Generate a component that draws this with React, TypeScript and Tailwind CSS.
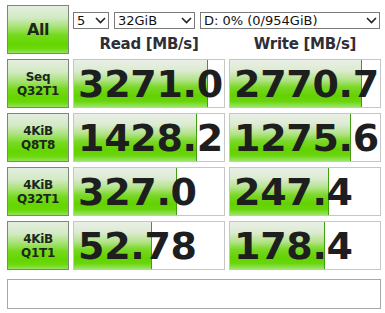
import React from "react";

type Row = { l1: string; l2: string; r: string; w: string };

const rows: Row[] = [
  { l1: "Seq", l2: "Q32T1", r: "3271.0", w: "2770.7" },
  { l1: "4KiB", l2: "Q8T8", r: "1428.2", w: "1275.6" },
  { l1: "4KiB", l2: "Q32T1", r: "327.0", w: "247.4" },
  { l1: "4KiB", l2: "Q1T1", r: "52.78", w: "178.4" },
];

function barWidth(v: number) {
  return Math.round(25 + 31 * Math.log10(v));
}

function Chevron() {
  return (
    <svg width="11" height="7" viewBox="0 0 11 7" className="shrink-0">
      <path d="M1 1 L5.5 5.5 L10 1" fill="none" stroke="#222" strokeWidth="1.6" />
    </svg>
  );
}

function Select({ text, w }: { text: string; w: string }) {
  return (
    <div
      className={`${w} h-[17px] border border-[#7a7a7a] bg-white flex items-center justify-between pl-[3px] pr-[2px] text-[13px] leading-none text-[#111]`}
    >
      <span>{text}</span>
      <Chevron />
    </div>
  );
}

function Result({ text }: { text: string }) {
  const v = parseFloat(text);
  return (
    <div className="relative h-[49px] border border-[#c6c6c6] bg-white flex items-center overflow-visible">
      <div
        className="absolute left-0 top-0 bottom-0 border-r border-[#3f9f10] bg-[linear-gradient(to_bottom,#eaefe7_0%,#dcebd2_22%,#b4e38a_42%,#7ad826_58%,#62d200_76%,#6ad60c_88%,#9ce46c_100%)]"
        style={{ width: barWidth(v) }}
      />
      <span className="relative pl-[4px] text-[38px] font-bold leading-none text-[#1e1e1e] whitespace-nowrap tracking-[-0.3px]">
        {text}
      </span>
    </div>
  );
}

function GreenButton({ children }: { children: React.ReactNode }) {
  return (
    <div className="h-[49px] border border-[#7d857d] bg-[linear-gradient(to_bottom,#e4eee0_0%,#d2eac4_25%,#a6e272_45%,#74da1c_62%,#64d600_80%,#6cd80a_90%,#94e25a_100%)] flex flex-col items-center justify-center text-[#1e261e] font-bold">
      {children}
    </div>
  );
}

export default function App() {
  return (
    <div className="w-[385px] h-[313px] bg-white font-['DejaVu_Sans',sans-serif] pt-[5px] pl-[7px] overflow-hidden">
      <div className="grid grid-cols-[62px_152px_152px] gap-x-[4px] gap-y-[5px]">
        <GreenButton>
          <span className="text-[16px] leading-none tracking-[-0.5px]">All</span>
        </GreenButton>
        <div className="col-span-2 flex flex-col pt-[7px]">
          <div className="flex gap-[5px]">
            <Select text="5" w="w-[36px]" />
            <Select text="32GiB" w="w-[81px]" />
            <Select text="D: 0% (0/954GiB)" w="w-[180px]" />
          </div>
          <div className="flex mt-[8px] text-[15px] font-bold text-[#2e2e36] leading-none tracking-[-0.3px]">
            <div className="w-[152px] text-center">Read [MB/s]</div>
            <div className="w-[4px]" />
            <div className="w-[152px] text-center">Write [MB/s]</div>
          </div>
        </div>
        {rows.map((row, i) => (
          <React.Fragment key={i}>
            <GreenButton>
              <span className="text-[12px] leading-[14px] tracking-[-0.3px]">{row.l1}</span>
              <span className="text-[12px] leading-[14px] tracking-[-0.3px]">{row.l2}</span>
            </GreenButton>
            <Result text={row.r} />
            <Result text={row.w} />
          </React.Fragment>
        ))}
      </div>
      <div className="mt-[9px] w-[374px] h-[30px] border border-[#a8a8a8] bg-white" />
    </div>
  );
}
